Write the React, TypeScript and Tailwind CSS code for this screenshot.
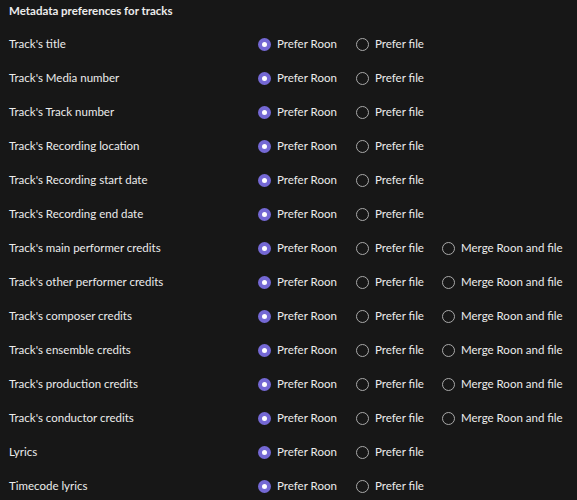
const rows: { label: string; merge?: boolean }[] = [
  { label: "Track's title" },
  { label: "Track's Media number" },
  { label: "Track's Track number" },
  { label: "Track's Recording location" },
  { label: "Track's Recording start date" },
  { label: "Track's Recording end date" },
  { label: "Track's main performer credits", merge: true },
  { label: "Track's other performer credits", merge: true },
  { label: "Track's composer credits", merge: true },
  { label: "Track's ensemble credits", merge: true },
  { label: "Track's production credits", merge: true },
  { label: "Track's conductor credits", merge: true },
  { label: "Lyrics" },
  { label: "Timecode lyrics" },
]

const Radio = ({ checked, text }: { checked?: boolean; text: string }) => (
  <div className="flex items-center gap-[6px]">
    {checked ? (
      <span className="w-[13px] h-[13px] rounded-full bg-[#7468d4] flex items-center justify-center">
        <span className="w-[5px] h-[5px] rounded-full bg-white" />
      </span>
    ) : (
      <span className="w-[13px] h-[13px] rounded-full border-[1.5px] border-[#a9a9a9]" />
    )}
    <span>{text}</span>
  </div>
)

export default function App() {
  return (
    <div
      className="w-[577px] h-[500px] overflow-hidden bg-[#171717] text-[#ececec] text-[11.5px] pl-[9px]"
      style={{ fontFamily: "Lato, 'Noto Sans', sans-serif" }}
    >
      <div className="font-bold h-[22px] flex items-center">Metadata preferences for tracks</div>
      <div className="flex flex-col pt-[5px]">
        {rows.map((r) => (
          <div key={r.label} className="grid grid-cols-[249px_98px_86px_1fr] items-center h-[34px]">
            <div>{r.label}</div>
            <Radio checked text="Prefer Roon" />
            <Radio text="Prefer file" />
            {r.merge ? <Radio text="Merge Roon and file" /> : <div />}
          </div>
        ))}
      </div>
    </div>
  )
}
